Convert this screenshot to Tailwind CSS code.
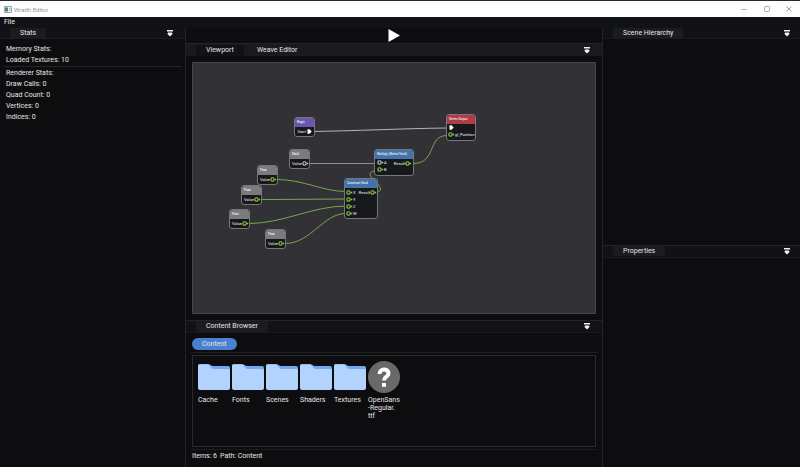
<!DOCTYPE html>
<html lang="en">
<head>
<meta charset="utf-8">
<meta name="viewport" content="width=device-width, initial-scale=1">
<title>Wraith Editor</title>
<script src="https://cdn.jsdelivr.net/npm/@tailwindcss/browser@4"></script>
</head>
<body class="flex h-screen flex-col overflow-hidden bg-[#0d0d0f] font-[Roboto,sans-serif] text-[7px] leading-[11px] text-[#e6e6e6]">

<svg class="hidden" aria-hidden="true">
  <symbol id="dock" viewBox="0 0 6 7"><path d="M0 0h6v1.5H0zM1 2.5h4v1h1L3 6.5 0 3.5h1z" fill="#f2f2f2"/></symbol>
  <symbol id="pin" viewBox="0 0 7 5"><circle cx="2.5" cy="2.5" r="1.700" fill="#15171a" stroke="currentColor" stroke-width="1.100"/><path d="M4.8 1.2 6.6 2.5 4.8 3.8z" fill="currentColor"/></symbol>
  <symbol id="exec" viewBox="0 0 5 5"><path d="M.5 .3h2L4.7 2.5 2.5 4.7h-2z" fill="#fff"/></symbol>
  <symbol id="folder" viewBox="0 0 32 26"><path d="M1.5 0h9l4 2H30a2 2 0 0 1 2 2v20H0V1.500Q0 0 1.500 0z" fill="#6fa8f5"/><path d="M1.500 .5H10.500L14.500 4.800Q15 5 16 5H30.500Q32 5 32 6.500V24Q32 26 30 26H2Q0 26 0 24V2Q0 .5 1.500 .5z" fill="#b3d2fd"/></symbol>
</svg>

<div class="h-px shrink-0 bg-[#2a2630]"></div>
<header class="flex h-4 shrink-0 items-center bg-[#fdfdfd] pl-1 text-[6px] text-[#9a9a9a]">
  <svg class="mr-[2px] h-[7px] w-2" viewBox="0 0 8 7" aria-hidden="true"><path d="M.5 .5h7v6h-7z" fill="#eef2f4" stroke="#9ba7ac"/><path d="M1 1.500h3v4H1z" fill="#4f8480"/><path d="M5 2h2v3H5z" fill="#c3ced6"/></svg>
  <h1 class="flex-1">Wraith Editor</h1>
  <div class="flex">
    <button class="grid h-4 w-[22px] place-items-center" aria-label="Minimize"><svg class="size-[6px]" viewBox="0 0 6 6"><path d="M.5 3.500h5" stroke="#999" stroke-width=".8"/></svg></button>
    <button class="grid h-4 w-[23px] place-items-center" aria-label="Maximize"><svg class="size-[6px]" viewBox="0 0 6 6"><rect x=".5" y=".5" width="5" height="5" rx=".8" fill="none" stroke="#999" stroke-width=".8"/></svg></button>
    <button class="grid h-4 w-[22px] place-items-center" aria-label="Close"><svg class="size-[6px]" viewBox="0 0 6 6"><path d="m.5 .5 5 5m0-5-5 5" stroke="#888" stroke-width=".8"/></svg></button>
  </div>
</header>
<nav class="flex h-[11px] shrink-0 items-center bg-[#111118] pl-1"><button>File</button></nav>

<main class="grid min-h-0 flex-1 grid-cols-[185px_minmax(0,1fr)_197px]">
  <section aria-label="Stats">
    <div class="flex h-[11px] items-center justify-between border-b border-[#1a1a1f] bg-[#111118] pr-3 pl-[10px]">
      <button class="h-[10px] bg-[#1b1b20] px-[10px] leading-[10px]">Stats</button>
      <button aria-label="Window menu"><svg class="h-[7px] w-[6px]"><use href="#dock"/></svg></button>
    </div>
    <div class="pt-[5px] pr-[3px] pl-1">
      <div class="pl-[2px]"><p>Memory Stats:</p><p>Loaded Textures: 10</p></div>
      <hr class="border-[#242428]">
      <div class="pt-px pl-[2px]"><p>Renderer Stats:</p><p>Draw Calls: 0</p><p>Quad Count: 0</p><p>Vertices: 0</p><p>Indices: 0</p></div>
    </div>
  </section>

  <div class="flex min-h-0 min-w-0 flex-col border-x border-[#242428]">
    <div class="flex h-[15px] shrink-0 items-center justify-center">
      <button aria-label="Play"><svg class="h-[13px] w-3" viewBox="0 0 12 13"><path d="M.5 0 12 6.500.5 13z" fill="#fff"/></svg></button>
    </div>
    <section class="flex min-h-0 flex-1 flex-col" aria-label="Viewport">
      <div class="flex h-[13px] shrink-0 items-center gap-[3px] border-t border-[#242428] bg-[#1a1a1e] pr-3 pl-[10px]">
        <button class="h-[11px] bg-[#111118] px-[10px]">Viewport</button>
        <button class="h-[11px] px-[10px]">Weave Editor</button>
        <button class="ml-auto" aria-label="Window menu"><svg class="h-[7px] w-[6px]"><use href="#dock"/></svg></button>
      </div>
      <div class="mx-[6px] mt-[6px] mb-[6px] min-h-0 flex-1 overflow-hidden border border-[#47474d] bg-[#313136]">
        <div class="relative h-full text-[4px] leading-[5px] text-[#f0f0f0]">
          <svg class="absolute inset-0 size-full" fill="none" stroke-width="1" aria-hidden="true">
            <path d="M117 68.500C160 68 210 65.500 254 65" stroke="#b5b5b8"/>
            <path d="M116 100.500h67" stroke="#8e9096"/>
            <g stroke="#79a84a">
              <path d="M84 116.500C110 116.500 130 128.500 153 128.500"/>
              <path d="M68 136.500 153 136"/>
              <path d="M56 160.500C90 160.500 120 143 153 143"/>
              <path d="M92 180.500C118 180.500 130 150.500 153 150.500"/>
              <path d="M184 128.500C192 128 185 121 180 116S177 108 183 108"/>
              <path d="M220 100.500C244 100.500 234 72.500 254 72.500"/>
            </g>
          </svg>

          <article class="absolute top-[54px] left-[101px] w-[21px] overflow-hidden rounded-[3px] border border-[#77777b] bg-[#17181b] pb-px">
            <h2 class="h-[9px] bg-[#6c55ad] pt-[2px] pl-[2px] text-[3px] font-medium">Begin</h2>
            <p class="flex h-[8px] items-center justify-end">Start<svg class="mr-[2px] ml-px size-[5px]"><use href="#exec"/></svg></p>
          </article>
          <article class="absolute top-[86px] left-[96px] w-[21px] overflow-hidden rounded-[3px] border border-[#77777b] bg-[#17181b] pb-px">
            <h2 class="h-[9px] bg-[#7b7b7d] pt-[2px] pl-[2px] text-[3px] font-medium">Mat4</h2>
            <p class="flex h-[8px] items-center justify-end">Value<svg class="h-[5px] w-[7px] text-[#c8cdd0]"><use href="#pin"/></svg></p>
          </article>
          <article class="absolute top-[102px] left-[64px] w-[21px] overflow-hidden rounded-[3px] border border-[#77777b] bg-[#17181b] pb-px">
            <h2 class="h-[9px] bg-[#7b7b7d] pt-[2px] pl-[2px] text-[3px] font-medium">Float</h2>
            <p class="flex h-[8px] items-center justify-end">Value<svg class="h-[5px] w-[7px] text-[#8fd04a]"><use href="#pin"/></svg></p>
          </article>
          <article class="absolute top-[122px] left-[48px] w-[21px] overflow-hidden rounded-[3px] border border-[#77777b] bg-[#17181b] pb-px">
            <h2 class="h-[9px] bg-[#7b7b7d] pt-[2px] pl-[2px] text-[3px] font-medium">Float</h2>
            <p class="flex h-[8px] items-center justify-end">Value<svg class="h-[5px] w-[7px] text-[#8fd04a]"><use href="#pin"/></svg></p>
          </article>
          <article class="absolute top-[146px] left-[36px] w-[21px] overflow-hidden rounded-[3px] border border-[#77777b] bg-[#17181b] pb-px">
            <h2 class="h-[9px] bg-[#7b7b7d] pt-[2px] pl-[2px] text-[3px] font-medium">Float</h2>
            <p class="flex h-[8px] items-center justify-end">Value<svg class="h-[5px] w-[7px] text-[#8fd04a]"><use href="#pin"/></svg></p>
          </article>
          <article class="absolute top-[166px] left-[72px] w-[21px] overflow-hidden rounded-[3px] border border-[#77777b] bg-[#17181b] pb-px">
            <h2 class="h-[9px] bg-[#7b7b7d] pt-[2px] pl-[2px] text-[3px] font-medium">Float</h2>
            <p class="flex h-[8px] items-center justify-end">Value<svg class="h-[5px] w-[7px] text-[#8fd04a]"><use href="#pin"/></svg></p>
          </article>
          <article class="absolute top-[115px] left-[151px] w-[34px] overflow-hidden rounded-[3px] border border-[#77777b] bg-[#17181b] pb-px">
            <h2 class="h-[9px] bg-[#4373ab] pt-[2px] pl-[2px] text-[3px] font-medium whitespace-nowrap">Construct Vec4</h2>
            <div class="flex justify-between pl-px leading-[7px]">
              <ul class="pt-px">
                <li class="flex items-center"><svg class="h-[5px] w-[7px] text-[#8fd04a]"><use href="#pin"/></svg>X</li>
                <li class="flex items-center"><svg class="h-[5px] w-[7px] text-[#8fd04a]"><use href="#pin"/></svg>Y</li>
                <li class="flex items-center"><svg class="h-[5px] w-[7px] text-[#8fd04a]"><use href="#pin"/></svg>Z</li>
                <li class="flex items-center"><svg class="h-[5px] w-[7px] text-[#8fd04a]"><use href="#pin"/></svg>W</li>
              </ul>
              <p class="flex h-[8px] items-center">Result<svg class="h-[5px] w-[7px] text-[#8fd04a]"><use href="#pin"/></svg></p>
            </div>
          </article>
          <article class="absolute top-[86px] left-[181px] w-[40px] overflow-hidden rounded-[3px] border border-[#77777b] bg-[#17181b] pb-[2px]">
            <h2 class="h-[9px] bg-[#4373ab] pt-[2px] pl-[2px] text-[3px] font-medium whitespace-nowrap">Multiply (Matrix/Vec4)</h2>
            <div class="flex justify-between pr-px pl-[2px] leading-[7px]">
              <ul>
                <li class="flex items-center"><svg class="h-[5px] w-[7px] text-[#c8cdd0]"><use href="#pin"/></svg>A</li>
                <li class="flex items-center"><svg class="h-[5px] w-[7px] text-[#8fd04a]"><use href="#pin"/></svg>B</li>
              </ul>
              <p class="flex h-[8px] items-center">Result<svg class="h-[5px] w-[7px] text-[#8fd04a]"><use href="#pin"/></svg></p>
            </div>
          </article>
          <article class="absolute top-[51px] left-[253px] w-[30px] overflow-hidden rounded-[3px] border border-[#77777b] bg-[#17181b] pb-[2px]">
            <h2 class="h-[9px] bg-[#b03b42] pt-[2px] pl-[2px] text-[3px] font-medium whitespace-nowrap">Vertex Output</h2>
            <ul class="pl-px leading-[7px]">
              <li class="flex h-[7px] items-center pl-px"><svg class="size-[5px]"><use href="#exec"/></svg></li>
              <li class="flex items-center"><svg class="h-[5px] w-[7px] shrink-0 text-[#8fd04a]"><use href="#pin"/></svg>gl_Position</li>
            </ul>
          </article>
        </div>
      </div>
    </section>
    <section class="flex h-[147px] shrink-0 flex-col border-t border-[#242428]" aria-label="Content Browser">
      <div class="flex h-3 shrink-0 items-center justify-between border-b border-[#1a1a1f] bg-[#111118] pr-3 pl-[10px]">
        <button class="h-[11px] bg-[#1b1b20] px-[10px]">Content Browser</button>
        <button aria-label="Window menu"><svg class="h-[7px] w-[6px]"><use href="#dock"/></svg></button>
      </div>
      <div class="mx-1 flex border-b border-[#1c1c1f] px-[2px] pt-[5px] pb-[2px]">
        <button class="h-3 rounded-full bg-[#4a80cf] px-[10px]">Content</button>
      </div>
      <div class="mx-[6px] mt-[2px] flex flex-1 gap-[2px] border border-[#2a2a2e] px-[5px] pt-[5px] leading-[8px]">
        <figure class="w-8"><svg class="mt-[3px] mb-[6px] h-[26px] w-8"><use href="#folder"/></svg><figcaption>Cache</figcaption></figure>
        <figure class="w-8"><svg class="mt-[3px] mb-[6px] h-[26px] w-8"><use href="#folder"/></svg><figcaption>Fonts</figcaption></figure>
        <figure class="w-8"><svg class="mt-[3px] mb-[6px] h-[26px] w-8"><use href="#folder"/></svg><figcaption>Scenes</figcaption></figure>
        <figure class="w-8"><svg class="mt-[3px] mb-[6px] h-[26px] w-8"><use href="#folder"/></svg><figcaption>Shaders</figcaption></figure>
        <figure class="w-8"><svg class="mt-[3px] mb-[6px] h-[26px] w-8"><use href="#folder"/></svg><figcaption>Textures</figcaption></figure>
        <figure class="w-8"><svg class="mb-[3px] size-8" viewBox="0 0 32 32"><circle cx="16" cy="16" r="16" fill="#696969"/><path d="M11.500 13C11.500 7 20.500 7 20.500 12.500C20.500 16 16 15.500 16 19.500" fill="none" stroke="#fff" stroke-width="4"/><path d="M14 22h4v3.800h-4z" fill="#fff"/></svg><figcaption class="whitespace-nowrap">OpenSans<br>-Regular.<br>ttf</figcaption></figure>
      </div>
      <footer class="mx-1 mt-[2px] flex gap-[3px] border-t border-[#1c1c1f] px-[2px] pt-px pb-[5px]"><span>Items: 6</span><span>Path: Content</span></footer>
    </section>
  </div>

  <div class="flex min-h-0 flex-col">
    <section class="flex-[99_1_0%]" aria-label="Scene Hierarchy">
      <div class="flex h-[11px] items-center justify-between border-b border-[#1a1a1f] bg-[#111118] pr-[10px] pl-[10px]">
        <button class="h-[10px] bg-[#1b1b20] px-[10px] leading-[10px]">Scene Hierarchy</button>
        <button aria-label="Window menu"><svg class="h-[7px] w-[6px]"><use href="#dock"/></svg></button>
      </div>
    </section>
    <section class="flex-[101_1_0%] border-t border-[#242428]" aria-label="Properties">
      <div class="flex h-3 items-center justify-between border-b border-[#1a1a1f] bg-[#111118] pr-[10px] pl-[10px]">
        <button class="h-[10px] bg-[#1b1b20] px-[10px] leading-[10px]">Properties</button>
        <button aria-label="Window menu"><svg class="h-[7px] w-[6px]"><use href="#dock"/></svg></button>
      </div>
    </section>
  </div>
</main>
</body>
</html>
